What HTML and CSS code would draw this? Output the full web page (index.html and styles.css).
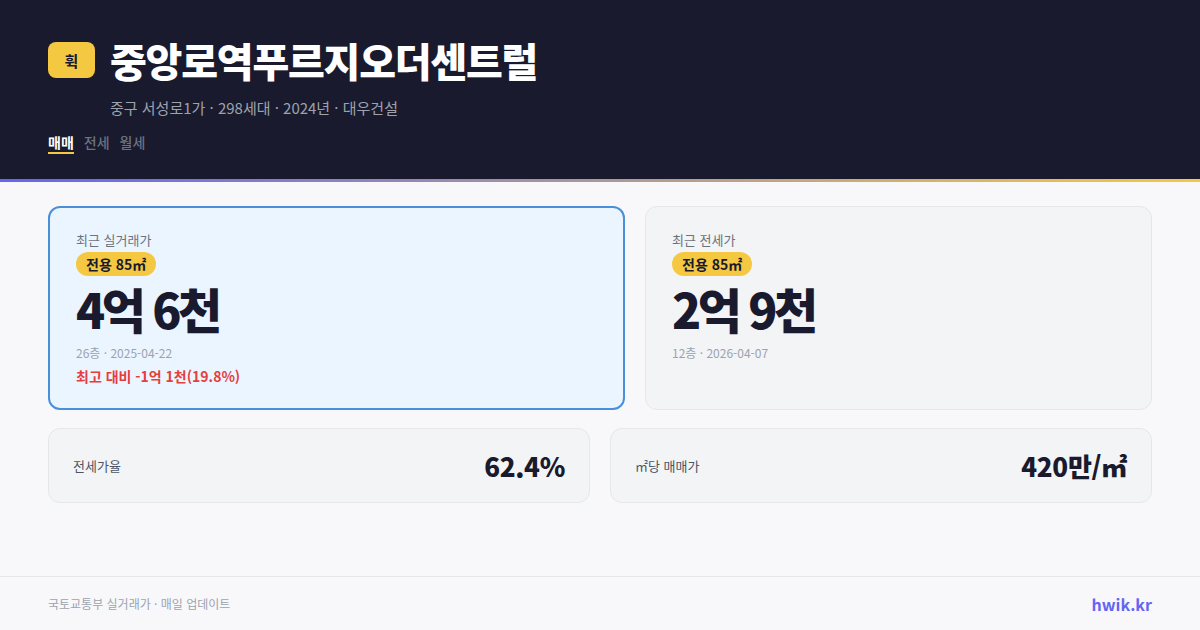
FILE: index.html
```html
<!DOCTYPE html>
<html lang="ko">
<head>
<meta charset="utf-8">
<link rel="stylesheet" href="styles.css">
</head>
<body>
<div class="page">
  <header class="hero">
    <div class="title-row">
      <div class="logo">휙</div>
      <h1 class="title">중앙로역푸르지오더센트럴</h1>
    </div>
    <div class="sub">중구 서성로1가 · 298세대 · 2024년 · 대우건설</div>
    <nav class="tabs">
      <span class="tab active">매매</span>
      <span class="tab">전세</span>
      <span class="tab">월세</span>
    </nav>
  </header>
  <div class="accent"></div>
  <main class="main">
    <div class="cards">
      <section class="card card-hl">
        <div class="label">최근 실거래가</div>
        <span class="badge">전용 85㎡</span>
        <div class="price">4억 6천</div>
        <div class="meta">26층 · 2025-04-22</div>
        <div class="diff">최고 대비 -1억 1천(19.8%)</div>
      </section>
      <section class="card">
        <div class="label">최근 전세가</div>
        <span class="badge">전용 85㎡</span>
        <div class="price">2억 9천</div>
        <div class="meta">12층 · 2026-04-07</div>
      </section>
    </div>
    <div class="stats">
      <div class="stat">
        <span class="stat-label">전세가율</span>
        <span class="stat-value">62.4%</span>
      </div>
      <div class="stat">
        <span class="stat-label">㎡당 매매가</span>
        <span class="stat-value">420만/㎡</span>
      </div>
    </div>
  </main>
  <footer class="footer">
    <span class="src">국토교통부 실거래가 · 매일 업데이트</span>
    <span class="brand">hwik.kr</span>
  </footer>
</div>
</body>
</html>
```

FILE: styles.css
```css
* { box-sizing: border-box; margin: 0; padding: 0; }
html, body { width: 1200px; height: 630px; overflow: hidden; }
body {
  font-family: "Noto Sans CJK KR", "Noto Sans", sans-serif;
  background: #f8f8fa;
  color: #1a1a2e;
}
.page { width: 1200px; height: 630px; display: flex; flex-direction: column; }
.hero {
  background: #1a1a2e;
  height: 179px;
  padding: 35px 48px 0;
}
.title-row { display: flex; align-items: center; gap: 15px; }
.logo {
  width: 47px; height: 36px;
  background: #f5c842;
  border-radius: 8px;
  display: flex; align-items: center; justify-content: center;
  font-size: 15px; font-weight: 700; color: #1a1a2e;
}
.title {
  font-size: 40px; font-weight: 900; color: #ffffff;
  line-height: 50px; letter-spacing: -1.2px;
}
.sub {
  margin: 12px 0 0 62px;
  font-size: 15px; color: #9ca3af; line-height: 22px;
}
.tabs { display: flex; gap: 10px; margin-top: 14px; }
.tab {
  font-size: 14px; color: #6b7280; line-height: 18px; padding-bottom: 1px;
  font-weight: 500;
}
.tab.active {
  color: #ffffff; font-weight: 700;
  border-bottom: 2px solid #f5c842;
}
.accent {
  height: 3px;
  background: linear-gradient(90deg, #6366f1, #f5c842);
}
.main { flex: 1; padding: 24px 48px 0; }
.cards {
  display: grid;
  grid-template-columns: 577fr 507fr;
  gap: 20px;
}
.card {
  height: 204px;
  background: #f3f4f6;
  border: 1px solid #e5e7eb;
  border-radius: 12px;
  padding: 24px 26px;
  display: flex; flex-direction: column; align-items: flex-start;
}
.card-hl {
  background: #ebf5ff;
  border: 2px solid #4a90d9;
  padding: 23px 26px;
}
.label { font-size: 13px; color: #6b7280; line-height: 18px; }
.badge {
  margin-top: 3px;
  background: #f5c842;
  border-radius: 12px;
  padding: 0 10px;
  font-size: 14px; font-weight: 700; line-height: 24px; color: #1a1a2e;
}
.price {
  font-size: 48px; font-weight: 900; line-height: 60px;
  letter-spacing: -3.5px; color: #1a1a2e; margin-top: 2px;
}
.meta { font-size: 12px; color: #9ca3af; line-height: 18px; margin-top: 6px; }
.diff { font-size: 14px; color: #e53e3e; font-weight: 700; line-height: 20px; margin-top: 4px; }
.stats {
  display: grid;
  grid-template-columns: 1fr 1fr;
  gap: 20px;
  margin-top: 18px;
}
.stat {
  height: 75px;
  background: #f3f4f6;
  border: 1px solid #e5e7eb;
  border-radius: 12px;
  padding: 0 24px;
  display: flex; align-items: center; justify-content: space-between;
}
.stat-label { font-size: 13px; color: #4b5563; }
.stat-value { font-size: 26px; font-weight: 900; color: #1a1a2e; letter-spacing: -0.3px; }
.footer {
  height: 54px;
  border-top: 1px solid #e5e7eb;
  padding: 0 48px;
  display: flex; align-items: center; justify-content: space-between;
}
.src { font-size: 12px; color: #9ca3af; }
.brand { font-size: 16px; font-weight: 700; color: #6366f1; }
```
